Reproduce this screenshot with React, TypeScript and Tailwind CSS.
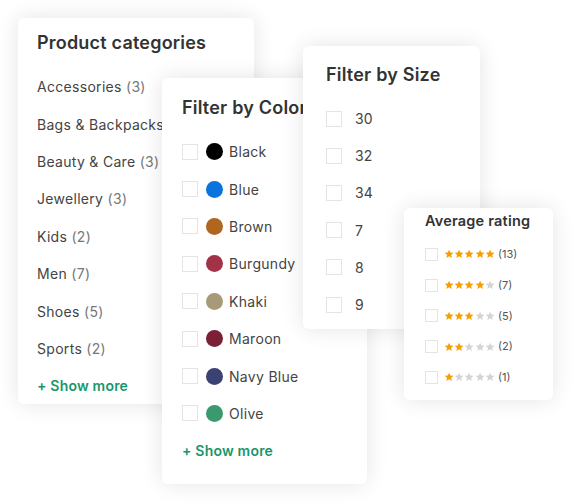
import React from "react";

const font = { fontFamily: "Inter, 'Open Sans', sans-serif" };

function Box({ size = 16 }: { size?: number }) {
  return (
    <span
      className="shrink-0 border border-[#e4e4e4] bg-white"
      style={{ width: size, height: size }}
    />
  );
}

function Star({ filled }: { filled: boolean }) {
  return (
    <svg width="10.2" height="10" viewBox="0 0 24 24" className="shrink-0">
      <path
        d="M12 1.5l3.1 6.9 7.4.7-5.6 5 1.7 7.4L12 17.6l-6.6 3.9 1.7-7.4-5.6-5 7.4-.7z"
        fill={filled ? "#f59f00" : "#d4d4d4"}
      />
    </svg>
  );
}

const categories = [
  ["Accessories", 3],
  ["Bags & Backpacks", 2],
  ["Beauty & Care", 3],
  ["Jewellery", 3],
  ["Kids", 2],
  ["Men", 7],
  ["Shoes", 5],
  ["Sports", 2],
] as const;

const colors = [
  ["Black", "#000000"],
  ["Blue", "#0a74dc"],
  ["Brown", "#b0661f"],
  ["Burgundy", "#a23248"],
  ["Khaki", "#a89a78"],
  ["Maroon", "#7c2036"],
  ["Navy Blue", "#3b4172"],
  ["Olive", "#3b9a6d"],
];

const sizes = ["30", "32", "34", "7", "8", "9"];

const ratings = [
  [5, 13],
  [4, 7],
  [3, 5],
  [2, 2],
  [1, 1],
];

const card =
  "absolute bg-white rounded-[6px] shadow-[0_0_22px_rgba(0,0,0,0.11)] overflow-hidden";

export default function App() {
  return (
    <div
      className="relative w-[572px] h-[502px] bg-white overflow-hidden"
      style={font}
    >
      {/* Product categories */}
      <div className={`${card} left-[18px] top-[18px] w-[236px] h-[386px] pl-[19px]`}>
        <div className="h-[50px] pt-[12px] text-[18px] leading-[26px] font-semibold text-[#333] tracking-[0.2px]">
          Product categories
        </div>
        <div className="flex flex-col">
          {categories.map(([n, c]) => (
            <div
              key={n}
              className="h-[37.4px] flex items-center text-[14px] text-[#444] whitespace-nowrap tracking-[0.3px]"
            >
              {n}&nbsp;<span className="text-[#777]">({c})</span>
            </div>
          ))}
          <div className="h-[37.4px] flex items-center text-[14px] font-semibold text-[#17966a] tracking-[0.2px]">
            + Show more
          </div>
        </div>
      </div>

      {/* Filter by Color */}
      <div className={`${card} left-[162px] top-[78px] w-[205px] h-[406px] pl-[20px]`}>
        <div className="h-[55px] pt-[17px] text-[18px] leading-[26px] font-semibold text-[#333] whitespace-nowrap tracking-[0.2px]">
          Filter by Color
        </div>
        <div className="flex flex-col">
          {colors.map(([n, c]) => (
            <div key={n} className="h-[37.4px] flex items-center text-[14px] text-[#444] tracking-[0.3px]">
              <Box />
              <span
                className="ml-[8px] w-[17px] h-[17px] rounded-full shrink-0"
                style={{ background: c }}
              />
              <span className="ml-[6px]">{n}</span>
            </div>
          ))}
          <div className="h-[37.4px] flex items-center text-[14px] font-semibold text-[#17966a] tracking-[0.2px]">
            + Show more
          </div>
        </div>
      </div>

      {/* Filter by Size */}
      <div className={`${card} left-[303px] top-[46px] w-[177px] h-[283px] pl-[23px]`}>
        <div className="h-[54px] pt-[16px] text-[18px] leading-[26px] font-semibold text-[#333] tracking-[0.2px]">
          Filter by Size
        </div>
        <div className="flex flex-col">
          {sizes.map((s) => (
            <div key={s} className="h-[37.2px] flex items-center text-[14px] text-[#444]">
              <Box />
              <span className="ml-[13px]">{s}</span>
            </div>
          ))}
        </div>
      </div>

      {/* Average rating */}
      <div className={`${card} left-[404px] top-[208px] w-[149px] h-[192px] pl-[21px]`}>
        <div className="h-[31px] pt-[3px] text-[14.5px] leading-[20px] font-semibold text-[#333] tracking-[0.2px]">
          Average rating
        </div>
        <div className="flex flex-col">
          {ratings.map(([s, c]) => (
            <div key={c} className="h-[30.75px] flex items-center text-[11px] text-[#555]">
              <Box size={13} />
              <span className="ml-[6px] flex">
                {[0, 1, 2, 3, 4].map((i) => (
                  <Star key={i} filled={i < s} />
                ))}
              </span>
              <span className="ml-[3px]">({c})</span>
            </div>
          ))}
        </div>
      </div>
    </div>
  );
}
